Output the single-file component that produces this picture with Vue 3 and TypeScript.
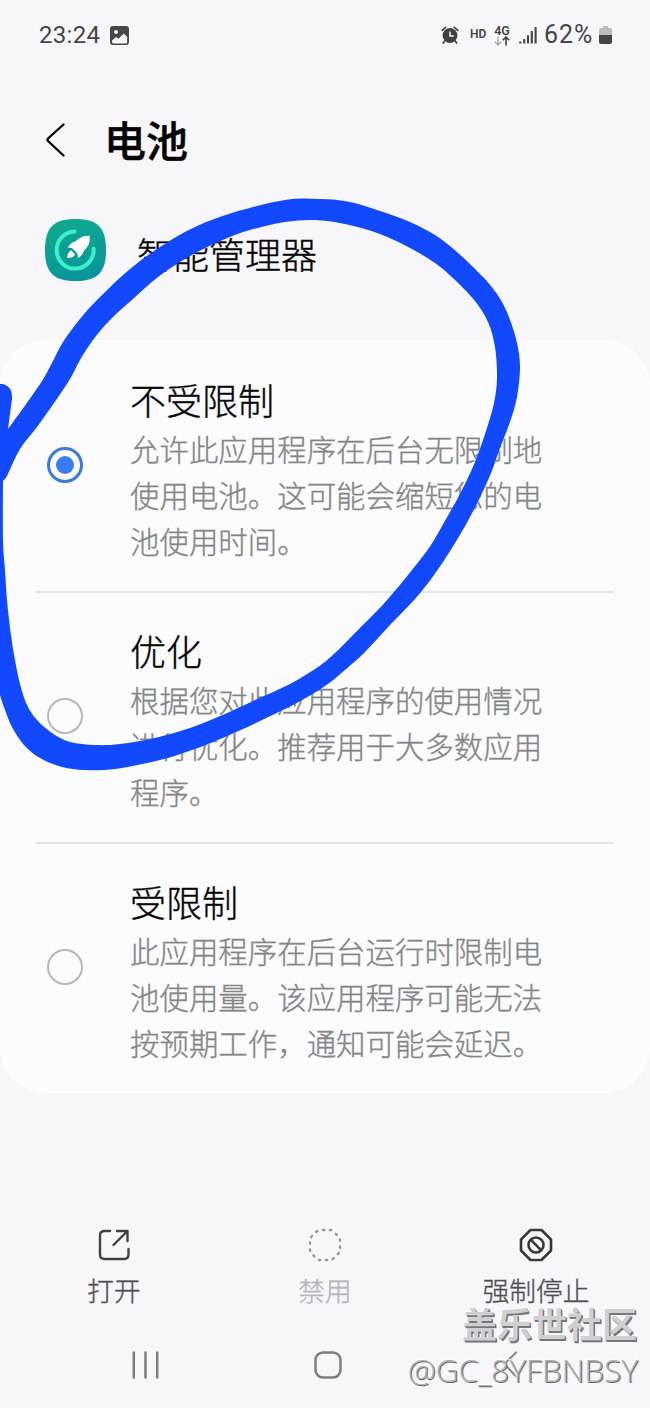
<script setup lang="ts">
import { ref } from 'vue'

type Point = [number, number]

interface PowerMode {
  id: string
  title: string
  lines: string[]
}

const modes: PowerMode[] = [
  {
    id: 'unrestricted',
    title: '不受限制',
    lines: ['允许此应用程序在后台无限制地', '使用电池。这可能会缩短您的电', '池使用时间。'],
  },
  {
    id: 'optimized',
    title: '优化',
    lines: ['根据您对此应用程序的使用情况', '进行优化。推荐用于大多数应用', '程序。'],
  },
  {
    id: 'restricted',
    title: '受限制',
    lines: ['此应用程序在后台运行时限制电', '池使用量。该应用程序可能无法', '按预期工作，通知可能会延迟。'],
  },
]

const selected = ref('unrestricted')

const outerEdge: Point[] = [
  [8, 429], [24, 407], [42, 381], [52, 363], [63, 342], [80, 319], [98, 299], [130, 269],
  [160, 247], [195, 227], [235, 212], [285, 200], [320, 199], [350, 202], [380, 211],
  [410, 222], [435, 235], [457, 252], [480, 274], [491, 286], [502, 302], [510, 320], [517, 343],
  [520, 367], [517, 397], [510, 422], [500, 448], [489, 478], [470, 517], [452, 548], [434, 575],
  [415, 599], [390, 625], [365, 652], [345, 670], [325, 686], [295, 704], [260, 721], [225, 737],
  [195, 749], [160, 760], [115, 769], [85, 770], [62, 767], [40, 758], [24, 745], [12, 727],
  [5, 710], [0, 695], [-5, 672],
]

const innerEdge: Point[] = [
  [8, 474], [20, 449], [37, 427], [54, 403], [70, 379], [80, 360], [93, 340],
  [110, 320], [133, 299], [158, 277], [190, 256], [225, 239], [250, 230], [285, 222],
  [315, 220], [345, 224], [380, 234], [410, 248], [435, 263], [455, 280], [475, 301], [488, 322],
  [495, 347], [497, 378], [494, 403], [486, 431], [475, 462], [461, 492], [446, 519], [431, 545],
  [412, 570], [388, 599], [370, 618], [352, 636], [335, 653], [318, 667], [290, 684], [255, 700],
  [225, 714], [190, 728], [155, 738], [120, 744], [95, 745], [70, 742], [52, 733], [37, 720],
  [27, 705], [20, 684], [15, 660], [11, 635], [7, 600], [5, 570], [3, 540], [3, 481],
]

/** Catmull-Rom interpolation of a point list into cubic segments. */
function curve(points: Point[]): string {
  let d = ''
  for (let i = 0; i < points.length - 1; i++) {
    const a = points[Math.max(i - 1, 0)]
    const b = points[i]
    const c = points[i + 1]
    const e = points[Math.min(i + 2, points.length - 1)]
    const c1 = [b[0] + (c[0] - a[0]) / 6, b[1] + (c[1] - a[1]) / 6]
    const c2 = [c[0] - (e[0] - b[0]) / 6, c[1] - (e[1] - b[1]) / 6]
    d += `C${c1[0]} ${c1[1]} ${c2[0]} ${c2[1]} ${c[0]} ${c[1]}`
  }
  return d
}

const strokePath =
  `M-5 384L3 384Q13 387 12 399L8 429${curve(outerEdge)}Z` + `M8 474${curve(innerEdge)}Q6 479 8 474Z`
</script>

<template>
  <main class="screen">
    <header class="status">
      <div class="status-left">
        <span class="clock">23:24</span>
        <svg class="picture" viewBox="0 0 19 19">
          <rect width="19" height="19" rx="3" fill="#484848" />
          <circle cx="6" cy="6" r="2" fill="#f6f6fb" />
          <path d="M2 14.5 6 11l2.7 1.8 5-5.2L17.2 11v5q0 1.4-1.4 1.4H3.3Q2 17.400 2 16z" fill="#f6f6fb" />
        </svg>
      </div>
      <div class="status-right">
        <svg class="alarm" viewBox="0 0 18 18">
          <circle cx="9" cy="9.5" r="7.400" fill="#414141" />
          <path d="M1.200 4.300 4.600 1.400M16.800 4.300 13.400 1.400M4 14.800 2.300 17M14 14.800 15.700 17" stroke="#414141" stroke-width="1.700" stroke-linecap="round" />
          <path d="M9 5.500V10H12.800" fill="none" stroke="#f6f6fb" stroke-width="1.500" />
        </svg>
        <span class="hd">HD</span>
        <div class="network">
          <span class="gen">4G</span>
          <svg class="arrows" viewBox="0 0 16 10">
            <path d="M4 .5V9M.8 5.700 4 9 7.200 5.700" fill="none" stroke="#aaaaae" stroke-width="1.400" />
            <path d="M12 9.500V1M8.800 4.300 12 1 15.200 4.300" fill="none" stroke="#414141" stroke-width="1.600" />
          </svg>
        </div>
        <svg class="signal" viewBox="0 0 18 18">
          <path d="M1.300 15.500V17.500M5.200 13V17.500M9 9.300V17.500M12.800 5V17.500M16.600 1V17.500" stroke="#454545" stroke-width="2.100" />
        </svg>
        <span class="percent">62%</span>
        <svg class="battery" viewBox="0 0 13 19">
          <path d="M4 2V1q0-1 1-1h3q1 0 1 1v1h2q2 0 2 2v5H0V4q0-2 2-2z" fill="#bdbdc0" />
          <path d="M0 9h13v7q0 2-2 2H2q-2 0-2-2z" fill="#454545" />
        </svg>
      </div>
    </header>

    <section class="title-bar">
      <svg class="back" viewBox="0 0 20 34">
        <path d="M17.500 1.500 2 15.500Q1 16.700 2 18L17.500 32.500" fill="none" stroke="#050505" stroke-width="2.300" stroke-linecap="round" />
      </svg>
      <h1>电池</h1>
    </section>

    <section class="app-row">
      <svg class="app-icon" viewBox="0 0 61 62">
        <defs>
          <linearGradient id="tile" x1="0" y1="0" x2=".3" y2="1">
            <stop offset="0" stop-color="#12ab8e" />
            <stop offset="1" stop-color="#08969b" />
          </linearGradient>
        </defs>
        <path d="M30.500 0C52 0 61 8 61 31S52 62 30.500 62 0 54 0 31 9 0 30.500 0z" fill="url(#tile)" />
        <path d="M29.700 12.600A18.500 18.500 0 1 0 48.600 29.500" fill="none" stroke="#3df0c8" stroke-width="4" stroke-linecap="round" />
        <path d="M44.500 16.800Q36 16.500 30.200 22.600 25.500 23.800 22.800 28.600L27 28.900 32.500 34.500 33 39.200Q37.500 36.600 39 31.700 46 25 44.500 16.800z" fill="#fff" />
        <path d="M26 31.300 30.200 35.500Q28 39 22.200 39 22.300 33.800 26 31.300z" fill="#fff" />
      </svg>
      <span class="app-name">智能管理器</span>
    </section>

    <section class="card">
      <div v-for="mode in modes" :key="mode.id" class="mode" @click="selected = mode.id">
        <span class="radio" :class="{ on: selected === mode.id }"></span>
        <div class="copy">
          <h2>{{ mode.title }}</h2>
          <p><span v-for="line in mode.lines" :key="line">{{ line }}</span></p>
        </div>
      </div>
    </section>

    <section class="actions">
      <div class="action">
        <svg viewBox="0 0 34 34" fill="none" stroke="#424246" stroke-width="2.400" stroke-linecap="round" stroke-linejoin="round">
          <path d="M13 3H7.500Q3 3 3 7.500V26.500Q3 31 7.500 31H27Q31.500 31 31.500 26.500V21M20 3H30.500V13M30.500 3 16.500 17" />
        </svg>
        <span>打开</span>
      </div>
      <div class="action off">
        <svg viewBox="0 0 34 34" fill="none" stroke="#98989d" stroke-width="2.400" stroke-linecap="round">
          <path d="M12 2H22Q24 2 26 4L30 8Q32 10 32 12V22Q32 24 30 26L26 30Q24 32 22 32H12Q10 32 8 30L4 26Q2 24 2 22V12Q2 10 4 8L8 4Q10 2 12 2Z" path-length="98" stroke-dasharray="1.400 5.600" stroke-dashoffset="-3" />
        </svg>
        <span>禁用</span>
      </div>
      <div class="action">
        <svg viewBox="0 0 34 34" fill="none" stroke="#38383c" stroke-width="2.600" stroke-linejoin="round">
          <path d="M11.500 2H22.500L32 11.500V22.500L22.500 32H11.500L2 22.500V11.500Z" />
          <circle cx="17" cy="17" r="7.500" />
          <path d="M11.700 11.700 22.300 22.300" />
        </svg>
        <span>强制停止</span>
      </div>
    </section>

    <nav class="nav">
      <svg viewBox="0 0 28 30"><path d="M1.800 2.500V27.500M13.500 2.500V27.500M25.200 2.500V27.500" stroke="#7d7d80" stroke-width="2.500" stroke-linecap="round" /></svg>
      <svg viewBox="0 0 28 30"><rect x="1.500" y="2.500" width="25" height="25" rx="7.500" fill="none" stroke="#7d7d80" stroke-width="2.500" /></svg>
      <svg viewBox="0 0 28 30"><path d="M20.500 2 8.500 14 20.500 27" fill="none" stroke="#88888b" stroke-width="2" /></svg>
    </nav>

    <svg class="ink" viewBox="0 0 650 1408">
      <path :d="strokePath" fill="#1349fd" fill-rule="evenodd" />
    </svg>

    <aside class="watermark">
      <span class="community">盖乐世社区</span>
      <span class="author">@GC_8YFBNBSY</span>
    </aside>
  </main>
</template>

<style>
body {
  margin: 0;
  background: #f6f6fb;
}
</style>

<style scoped>
.screen {
  position: relative;
  width: 650px;
  height: 1408px;
  overflow: hidden;
  background: #f6f6fb;
  font-family: "Noto Sans CJK SC", sans-serif;
  font-weight: 300;
  color: #050505;
}
svg {
  display: block;
  flex: none;
}
.status {
  display: flex;
  justify-content: space-between;
  height: 70px;
  padding: 0 38px 0 39px;
  box-sizing: border-box;
  color: #454545;
  font-family: Roboto, sans-serif;
}
.status-left,
.status-right {
  display: flex;
  align-items: center;
}
.clock,
.percent {
  font-size: 24px;
  font-weight: 400;
  line-height: 70px;
  height: 70px;
}
.clock {
  width: 71px;
  letter-spacing: 0.3px;
}
.picture {
  width: 19px;
  height: 19px;
}
.alarm {
  width: 18px;
  height: 18px;
}
.hd {
  margin-left: 11px;
  width: 25px;
  font-size: 12px;
  font-weight: 600;
  line-height: 14px;
  margin-bottom: 2px;
}
.network {
  width: 16px;
  margin-left: -1px;
  text-align: center;
}
.gen {
  display: block;
  font-size: 12.500px;
  font-weight: 600;
  line-height: 11px;
}
.arrows {
  width: 16px;
  height: 10px;
}
.signal {
  width: 18px;
  height: 18px;
  margin-left: 9px;
}
.percent {
  margin-left: 7px;
  width: 50px;
  margin-right: 5px;
  font-size: 25px;
  letter-spacing: 1px;
  white-space: nowrap;
}
.battery {
  width: 13px;
  height: 19px;
}
.title-bar {
  display: flex;
  align-items: center;
  height: 140px;
  padding-left: 46px;
}
.back {
  width: 20px;
  height: 34px;
}
h1 {
  margin: -2px 0 0 38px;
  font-size: 42px;
  font-weight: 500;
  line-height: 60px;
  -webkit-text-stroke: 0.5px currentColor;
}
.app-row {
  display: flex;
  align-items: center;
  height: 80px;
  padding-left: 45px;
}
.app-icon {
  width: 61px;
  height: 62px;
}
.app-name {
  margin: 6px 0 0 31px;
  font-size: 36px;
  line-height: 54px;
  -webkit-text-stroke: 0.4px currentColor;
}
.card {
  margin-top: 50px;
  height: 753px;
  border-radius: 46px;
  background: #fcfcff;
}
.mode {
  position: relative;
  display: flex;
  height: 251px;
  align-items: flex-start;
  padding-left: 47px;
}
.mode + .mode::before {
  content: "";
  position: absolute;
  top: 0;
  left: 36px;
  right: 36px;
  height: 2px;
  background: #e3e3e7;
}
.radio {
  display: flex;
  align-items: center;
  justify-content: center;
  margin-top: 107px;
  width: 36px;
  height: 36px;
  box-sizing: border-box;
  border: 2.500px solid #b7b7bb;
  border-radius: 50%;
}
.radio.on {
  border: 3px solid #3d78db;
}
.radio.on::after {
  content: "";
  width: 18px;
  height: 18px;
  border-radius: 50%;
  background: #377cf1;
}
.copy {
  margin: 32px 0 0 47px;
}
h2 {
  margin: 0;
  font-size: 36px;
  font-weight: 300;
  line-height: 54px;
  -webkit-text-stroke: 0.4px currentColor;
}
p {
  margin: 0;
  font-size: 29.450px;
  line-height: 45.800px;
  color: #858589;
  -webkit-text-stroke: 0.35px currentColor;
}
p span {
  display: block;
  white-space: nowrap;
}
.actions {
  display: grid;
  grid-template-columns: repeat(3, 211px);
  justify-content: center;
  margin-top: 135px;
  height: 92px;
}
.action {
  display: flex;
  flex-direction: column;
  align-items: center;
  font-size: 26.700px;
  line-height: 32px;
  color: #505054;
  -webkit-text-stroke: 0.35px currentColor;
}
.action svg {
  width: 34px;
  height: 34px;
  margin-bottom: 12px;
}
.action.off {
  color: #b5b5ba;
}
.nav {
  display: flex;
  gap: 154px;
  padding-left: 132px;
  margin-top: 30px;
}
.nav svg {
  width: 28px;
  height: 30px;
}
.ink {
  position: absolute;
  inset: 0;
  width: 650px;
  height: 1408px;
  pointer-events: none;
}
.watermark {
  position: absolute;
  right: 12px;
  bottom: 16px;
  display: flex;
  flex-direction: column;
  align-items: flex-end;
  white-space: nowrap;
}
.community {
  margin-right: 1px;
  margin-bottom: 7px;
  font-size: 35px;
  font-weight: 700;
  line-height: 36px;
  color: #d0d0d2;
  text-shadow: 1px 1px 0 #77777b, 1.500px 1.500px 0 #77777b, -1px -1px 1px #fff;
}
.author {
  font-family: "Open Sans", "Noto Sans", sans-serif;
  font-size: 31.600px;
  font-weight: 300;
  line-height: 44px;
  color: #b0b0b3;
  text-shadow: 1px 1px 0 #68686c, -1px -1px 1px #fff;
}
</style>
